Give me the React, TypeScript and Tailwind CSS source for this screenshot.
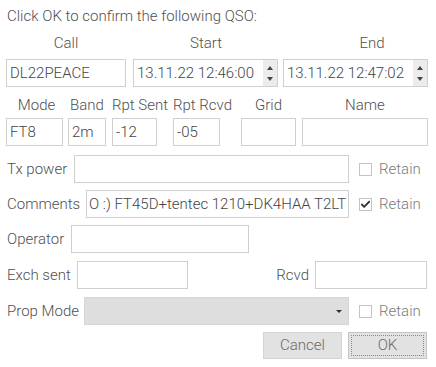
import { Check } from "lucide-react";

const box = "h-[28px] shrink-0 border border-[#cfcfcf] bg-white px-[3px] flex items-center text-[#454545] overflow-hidden whitespace-nowrap";
const lbl = "shrink-0 whitespace-nowrap pl-[1px]";

function Retain({ checked = false }: { checked?: boolean }) {
  return (
    <div className="flex items-center ml-[10px]">
      <span className="w-[13px] h-[13px] border border-[#c4c4c4] bg-white flex items-center justify-center">
        {checked && <Check className="w-[11px] h-[11px] text-[#333]" strokeWidth={4} />}
      </span>
      <span className="ml-[7px] text-[#7a7a7a]">Retain</span>
    </div>
  );
}

function Spin({ value, className }: { value: string; className: string }) {
  return (
    <div className={`${box} !pr-0 ${className}`}>
      <span className="flex-1">{value}</span>
      <div className="w-[14px] h-full bg-[#ececec] flex flex-col items-center justify-center gap-[7px]">
        <span className="w-0 h-0 border-x-[3px] border-x-transparent border-b-[4px] border-b-[#444]" />
        <span className="w-0 h-0 border-x-[3px] border-x-transparent border-t-[4px] border-t-[#444]" />
      </div>
    </div>
  );
}

export default function App() {
  return (
    <div
      className="w-[436px] h-[367px] bg-white text-[15px] font-light text-[#505050] pl-[6px] pt-[6px]"
      style={{ fontFamily: "Roboto, 'Liberation Sans', sans-serif" }}
    >
      <div className="h-[20px] flex items-center pl-[1px]">Click OK to confirm the following QSO:</div>

      {/* Call / Start / End */}
      <div className="flex h-[22px] mt-[6px] items-center">
        <div className="w-[120px] text-center">Call</div>
        <div className="w-[146px] ml-[7px] text-center">Start</div>
        <div className="w-[146px] ml-[5px] text-center pl-[30px]">End</div>
      </div>
      <div className="flex mt-[5px]">
        <div className={`${box} w-[120px]`}>DL22PEACE</div>
        <Spin value="13.11.22 12:46:00" className="w-[145px] ml-[7px]" />
        <Spin value="13.11.22 12:47:02" className="w-[145px] ml-[5px]" />
      </div>

      {/* Mode row */}
      <div className="flex mt-[7px]">
        <div className="w-[57px] flex flex-col">
          <div className="h-[20px] text-center pl-[4px]">Mode</div>
          <div className={`${box} w-[57px] mt-[4px]`}>FT8</div>
        </div>
        <div className="w-[38px] ml-[5px] flex flex-col">
          <div className="h-[20px] text-center whitespace-nowrap">Band</div>
          <div className={`${box} w-[38px] mt-[4px]`}>2m</div>
        </div>
        <div className="w-[56px] ml-[6px] flex flex-col">
          <div className="h-[20px] whitespace-nowrap">Rpt Sent</div>
          <div className={`${box} w-[45px] mt-[4px]`}>-12</div>
        </div>
        <div className="w-[60px] ml-[5px] flex flex-col">
          <div className="h-[20px] whitespace-nowrap">Rpt Rcvd</div>
          <div className={`${box} w-[47px] mt-[4px]`}>-05</div>
        </div>
        <div className="w-[55px] ml-[8px] flex flex-col">
          <div className="h-[20px] text-center">Grid</div>
          <div className={`${box} w-[55px] mt-[4px]`}></div>
        </div>
        <div className="w-[126px] ml-[6px] flex flex-col">
          <div className="h-[20px] text-center">Name</div>
          <div className={`${box} w-[126px] mt-[4px]`}></div>
        </div>
      </div>

      <div className="flex items-center mt-[9px]">
        <span className={`${lbl} w-[68px]`}>Tx power</span>
        <div className={`${box} w-[275px]`}></div>
        <Retain />
      </div>

      <div className="flex items-center mt-[7px]">
        <span className={`${lbl} w-[80px]`}>Comments</span>
        <div className={`${box} w-[263px] !px-[2px]`}>O :) FT45D+tentec 1210+DK4HAA T2LT</div>
        <Retain checked />
      </div>

      <div className="flex items-center mt-[7px]">
        <span className={`${lbl} w-[65px]`}>Operator</span>
        <div className={`${box} w-[178px]`}></div>
      </div>

      <div className="flex items-center mt-[8px]">
        <span className={`${lbl} w-[71px]`}>Exch sent</span>
        <div className={`${box} w-[111px]`}></div>
        <span className="w-[127px] shrink-0 text-right pr-[6px]">Rcvd</span>
        <div className={`${box} w-[112px]`}></div>
      </div>

      <div className="flex items-center mt-[8px]">
        <span className={`${lbl} w-[78px]`}>Prop Mode</span>
        <div className="h-[28px] w-[265px] shrink-0 border border-[#d6d6d6] bg-[#dedede] flex items-center justify-end pr-[6px]">
          <span className="w-0 h-0 border-x-[3px] border-x-transparent border-t-[3px] border-t-[#333]" />
        </div>
        <Retain />
      </div>

      <div className="flex justify-end mt-[7px] pr-[9px] gap-[6px]">
        <button className="w-[79px] h-[27px] bg-[#e2e2e2] border border-[#d4d4d4] text-[#6a6a6a]">Cancel</button>
        <button className="w-[79px] h-[27px] bg-[#e2e2e2] border border-[#c4c4c4] p-[2px] text-[#6a6a6a]">
          <span className="w-full h-full flex items-center justify-center border border-dotted border-[#8a8a8a]">OK</span>
        </button>
      </div>
    </div>
  );
}
